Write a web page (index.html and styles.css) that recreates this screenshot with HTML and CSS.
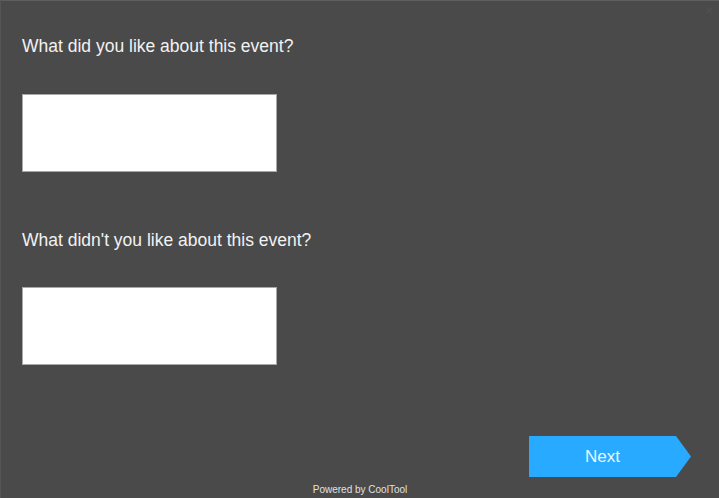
FILE: index.html
```html
<!DOCTYPE html>
<html>
<head>
<meta charset="utf-8">
<link rel="stylesheet" href="styles.css">
</head>
<body>
<div class="survey">
  <span class="close">×</span>
  <div class="questions">
    <label class="question">What did you like about this event?</label>
    <div class="answer"></div>
    <label class="question q2">What didn't you like about this event?</label>
    <div class="answer a2"></div>
  </div>
  <div class="actions">
    <button class="next">Next</button>
  </div>
  <div class="footer">Powered by CoolTool</div>
</div>
</body>
</html>
```
FILE: styles.css
```css
html, body {
  margin: 0;
  padding: 0;
  background: #4a4a4a;
}
.survey {
  position: relative;
  box-sizing: border-box;
  width: 719px;
  height: 498px;
  border-top: 1px solid #5e5e5e;
  border-left: 1px solid #555;
  font-family: "Liberation Sans", Arial, sans-serif;
  color: #f2f2f2;
  display: flex;
  flex-direction: column;
}
.close {
  position: absolute;
  top: 2px;
  right: 6px;
  font-size: 13px;
  color: #545454;
}
.questions {
  display: flex;
  flex-direction: column;
  align-items: flex-start;
  padding-left: 21px;
  padding-top: 35px;
}
.question {
  font-size: 17.5px;
  line-height: 20px;
  height: 20px;
}
.q2 {
  margin-top: 58px;
}
.answer {
  box-sizing: border-box;
  width: 255px;
  height: 78px;
  margin-top: 38px;
  background: #fff;
  border: 1px solid #a8a8a8;
}
.a2 {
  margin-top: 37px;
}
.actions {
  display: flex;
  justify-content: flex-end;
  padding-right: 28px;
  margin-top: 71px;
}
.next {
  width: 162px;
  height: 41px;
  border: 0;
  padding: 0 15px 0 0;
  background: #27aaff;
  color: #eaf6ff;
  font-family: "Liberation Sans", Arial, sans-serif;
  font-size: 17px;
  clip-path: polygon(0 0, 147px 0, 162px 50%, 147px 100%, 0 100%);
}
.footer {
  text-align: center;
  font-size: 10px;
  color: #e0e0e0;
  margin-top: 7px;
}
```
